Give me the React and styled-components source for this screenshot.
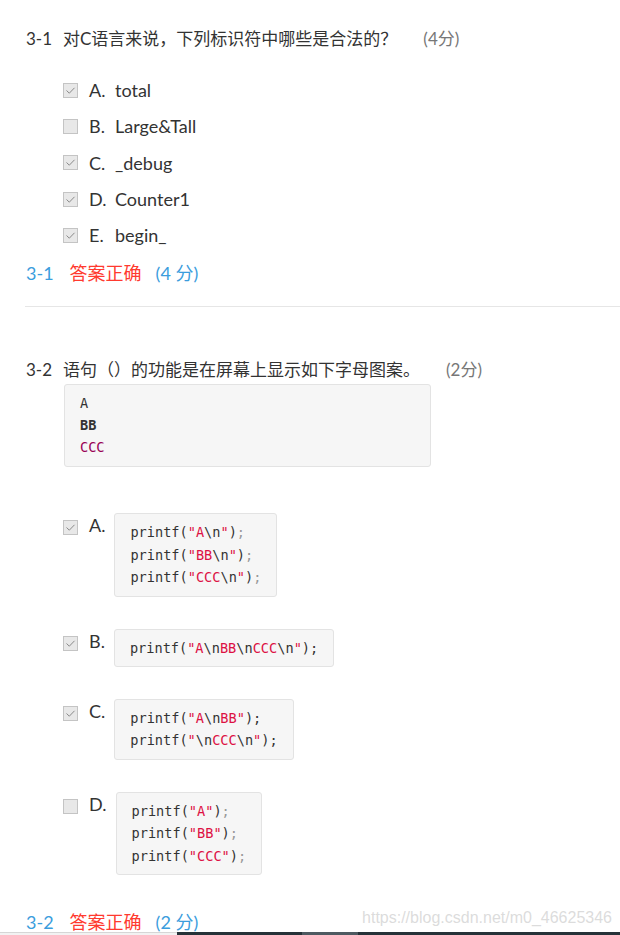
import React from "react";
import styled, { createGlobalStyle } from "styled-components";

const GlobalStyle = createGlobalStyle`
  body {
    margin: 0;
    background: #fff;
    font-family: "Lato", "Noto Sans CJK SC", sans-serif;
    color: #333;
  }
`;

const firstQuestion = {
  no: "3-1",
  title: "对C语言来说，下列标识符中哪些是合法的？",
  score: 4,
  options: [
    { key: "A", text: "total", checked: true },
    { key: "B", text: "Large&Tall", checked: false },
    { key: "C", text: "_debug", checked: true },
    { key: "D", text: "Counter1", checked: true },
    { key: "E", text: "begin_", checked: true },
  ],
};

// tokens: [text, kind]  kind: s = string, p = grey punctuation, none = plain
const codeOptions = [
  {
    key: "A",
    checked: true,
    lines: [
      [["printf("], ['"A', "s"], ["\\n"], ['"', "s"], [")"], [";", "p"]],
      [["printf("], ['"BB', "s"], ["\\n"], ['"', "s"], [")"], [";", "p"]],
      [["printf("], ['"CCC', "s"], ["\\n"], ['"', "s"], [")"], [";", "p"]],
    ],
  },
  {
    key: "B",
    checked: true,
    lines: [
      [
        ["printf("],
        ['"A', "s"],
        ["\\n"],
        ["BB", "s"],
        ["\\n"],
        ["CCC", "s"],
        ["\\n"],
        ['"', "s"],
        [");"],
      ],
    ],
  },
  {
    key: "C",
    checked: true,
    lines: [
      [["printf("], ['"A', "s"], ["\\n"], ['BB"', "s"], [");"]],
      [["printf("], ['"', "s"], ["\\n"], ["CCC", "s"], ["\\n"], ['"', "s"], [");"]],
    ],
  },
  {
    key: "D",
    checked: false,
    lines: [
      [["printf("], ['"A"', "s"], [")"], [";", "p"]],
      [["printf("], ['"BB"', "s"], [")"], [";", "p"]],
      [["printf("], ['"CCC"', "s"], [")"], [";", "p"]],
    ],
  },
];

const CheckMark = () => (
  <svg width="11" height="11" viewBox="0 0 11 11">
    <path d="M1.5 5.5 L4.3 8.2 L9.5 2.8" fill="none" stroke="#8a8a8a" strokeWidth="1" />
  </svg>
);

const Checkbox = ({ checked }) => <Box>{checked && <CheckMark />}</Box>;

const ResultLine = ({ no, score, gap }) => (
  <Result $gap={gap}>
    <span className="no">{no}</span>
    <span className="ok">答案正确</span>
    <span className="score">({score} 分)</span>
  </Result>
);

const Code = ({ lines }) => (
  <OptionCode>
    {lines.map((line, i) => (
      <div key={i}>
        {line.map(([t, k], j) => (
          <Tok key={j} $kind={k}>
            {t}
          </Tok>
        ))}
      </div>
    ))}
  </OptionCode>
);

export default function App() {
  const q = firstQuestion;
  return (
    <Page>
      <GlobalStyle />
      <Section>
        <Title>
          <span className="no">{q.no}</span>
          <span>{q.title}</span>
          <Score>(4分)</Score>
        </Title>
        <Options>
          {q.options.map((o) => (
            <Option key={o.key}>
              <Checkbox checked={o.checked} />
              <Label>{o.key}.</Label>
              <span>{o.text}</span>
            </Option>
          ))}
        </Options>
        <ResultLine no="3-1" score={4} gap={8} />
      </Section>
      <Divider />
      <Section $second>
        <Title>
          <span className="no">3-2</span>
          <span>语句（）的功能是在屏幕上显示如下字母图案。</span>
          <Score>(2分)</Score>
        </Title>
        <QuestionCode>
          <div>A</div>
          <div className="bold">BB</div>
          <div className="purple">CCC</div>
        </QuestionCode>
        <CodeOptions>
          {codeOptions.map((o) => (
            <CodeRow key={o.key}>
              <Checkbox checked={o.checked} />
              <CodeLabel>{o.key}.</CodeLabel>
              <Code lines={o.lines} />
            </CodeRow>
          ))}
        </CodeOptions>
        <ResultLine no="3-2" score={2} gap={35} />
      </Section>
      <Watermark>https://blog.csdn.net/m0_46625346</Watermark>
      <BottomBar>
        <div className="light" />
        <div className="dark">
          <div className="thumb" />
        </div>
      </BottomBar>
    </Page>
  );
}

const Page = styled.div`
  position: relative;
  height: 935px;
  overflow: hidden;
  padding-top: 27px;
  box-sizing: border-box;
`;

const Section = styled.div`
  padding-left: 26px;
  margin-top: ${(p) => (p.$second ? "51px" : "0")};
`;

const Title = styled.div`
  display: flex;
  align-items: center;
  font-size: 17px;
  line-height: 24px;
  color: #333;

  .no {
    width: 37px;
    flex-shrink: 0;
  }
`;

const Score = styled.span`
  margin-left: 26px;
  color: #777;
`;

const Options = styled.div`
  margin: 21px 0 0 37px;
  display: flex;
  flex-direction: column;
`;

const Option = styled.div`
  display: flex;
  align-items: center;
  height: 36.3px;
  font-size: 18px;
  color: #333;
`;

const Box = styled.span`
  width: 13px;
  height: 13px;
  border: 1px solid #c4c4c4;
  background: #e8e8e8;
  display: inline-flex;
  align-items: center;
  justify-content: center;
  flex-shrink: 0;
`;

const Label = styled.span`
  margin-left: 11px;
  width: 26px;
`;

const Result = styled.div`
  margin-top: ${(p) => p.$gap}px;
  display: flex;
  align-items: center;
  font-size: 18px;
  line-height: 24px;
  color: #3b9ddd;

  .ok {
    color: #ff3a2f;
    margin: 0 14px 0 16px;
  }
`;

const Divider = styled.div`
  margin: 21px 0 0 25px;
  height: 1px;
  background: #e6e6e6;
`;

const codeBase = `
  font-family: "DejaVu Sans Mono", "Liberation Mono", monospace;
  font-size: 13.6px;
  background: #f6f6f6;
  border: 1px solid #e3e3e3;
  border-radius: 3px;
  color: #333;
  white-space: pre;
  box-sizing: border-box;
`;

const QuestionCode = styled.div`
  ${codeBase}
  margin: 2px 0 0 38px;
  width: 367px;
  padding: 7px 15px 8px;
  line-height: 22px;

  .bold {
    font-weight: bold;
  }
  .purple {
    color: #990055;
  }
`;

const CodeOptions = styled.div`
  margin: 46px 0 0 37px;
  display: flex;
  flex-direction: column;
  gap: 31.7px;
`;

const CodeRow = styled.div`
  display: flex;
  align-items: flex-start;

  ${Box} {
    margin-top: 7px;
  }
`;

const CodeLabel = styled.span`
  margin-left: 11px;
  margin-right: 9px;
  font-size: 18px;
  line-height: 24px;
  color: #333;
`;

const OptionCode = styled.div`
  ${codeBase}
  display: inline-block;
  padding: 7px 15px;
  line-height: 22.5px;
`;

const Tok = styled.span`
  color: ${(p) =>
    p.$kind === "s" ? "#dd1144" : p.$kind === "p" ? "#999" : "#333"};
`;

const Watermark = styled.div`
  position: absolute;
  right: 8px;
  bottom: 8px;
  font-family: "Liberation Sans", Arial, sans-serif;
  font-size: 16px;
  color: rgba(190, 190, 190, 0.55);
  pointer-events: none;
`;

const BottomBar = styled.div`
  position: absolute;
  left: 0;
  right: 0;
  bottom: 0;
  height: 3px;
  display: flex;

  .light {
    width: 177px;
    border-top: 1px solid #d6d6d6;
    background: #f2f2f2;
  }
  .dark {
    flex: 1;
    background: #263238;
    position: relative;
  }
  .thumb {
    position: absolute;
    left: 125px;
    width: 56px;
    top: 0;
    bottom: 0;
    background: #4e5a61;
  }
`;
